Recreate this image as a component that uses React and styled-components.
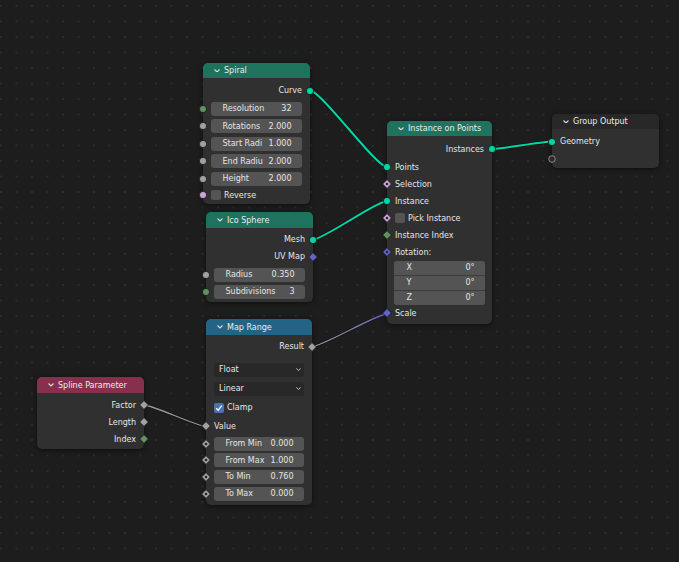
import React from "react";
import styled, { createGlobalStyle } from "styled-components";

const GEO = "#00d6a3";
const FLOAT = "#a1a1a1";
const INT = "#5e925f";
const BOOL = "#cca6d6";
const VEC = "#6363c7";

const Global = createGlobalStyle`
  html, body { margin: 0; padding: 0; background: #1d1d1d; }
  body { font-family: "DejaVu Sans", "Liberation Sans", sans-serif; }
`;

const Canvas = styled.div`
  position: relative;
  width: 679px;
  height: 562px;
  overflow: hidden;
  background-color: #1d1d1d;
  background-image: radial-gradient(circle, #2c2c2c 0.9px, transparent 1.4px);
  background-size: 15.5px 15.5px;
  background-position: -6.75px -1.75px;
  font-family: "DejaVu Sans", "Liberation Sans", sans-serif;
  font-size: 8px;
  color: #e6e6e6;
`;

const Wires = styled.svg`
  position: absolute;
  left: 0;
  top: 0;
`;

const NodeBox = styled.div`
  position: absolute;
  left: ${(p) => p.$x}px;
  top: ${(p) => p.$y}px;
  width: ${(p) => p.$w}px;
  background: #303030;
  border-radius: 5px;
  box-shadow: 0 1px 5px rgba(0, 0, 0, 0.55);
  display: flex;
  flex-direction: column;
  padding-bottom: ${(p) => p.$pb}px;
`;

const Header = styled.div`
  height: ${(p) => p.$h}px;
  background: ${(p) => p.$c};
  border-radius: 5px 5px 0 0;
  display: flex;
  align-items: center;
  gap: 4px;
  padding-left: 11px;
  color: #ededed;
  white-space: nowrap;
`;

const Row = styled.div`
  position: relative;
  height: ${(p) => p.$h}px;
  display: flex;
  align-items: center;
  justify-content: ${(p) => (p.$right ? "flex-end" : "flex-start")};
  padding: 0 8px;
  white-space: nowrap;
`;

const Gap = styled.div`
  height: ${(p) => p.$h}px;
  flex: none;
`;

const SocketWrap = styled.span`
  position: absolute;
  top: 50%;
  width: 10px;
  height: 10px;
  ${(p) =>
    p.$side === "right"
      ? "right: 0; transform: translate(50%, -50%);"
      : "left: 0; transform: translate(-50%, -50%);"}
  display: flex;
`;

const Field = styled.div`
  flex: 1;
  height: 14px;
  background: #545454;
  border-radius: 3px;
  display: flex;
  align-items: center;
  justify-content: space-between;
  padding: 0 10.5px 0 11.5px;
`;

const Select = styled.div`
  flex: 1;
  height: 14px;
  background: #282828;
  border-radius: 3px;
  display: flex;
  align-items: center;
  justify-content: space-between;
  padding: 0 3px 0 5px;
`;

const Box = styled.span`
  width: 10px;
  height: 10px;
  border-radius: 2px;
  background: ${(p) => (p.$on ? "#4772b3" : "#545454")};
  display: flex;
  align-items: center;
  justify-content: center;
  margin-right: 3px;
  flex: none;
`;

const VectorBox = styled.div`
  margin: 0 7px;
  border-radius: 3px;
  overflow: hidden;
  display: flex;
  flex-direction: column;
  gap: 1px;
  background: #3c3c3c;
`;

const VectorRow = styled.div`
  height: 14px;
  background: #545454;
  display: flex;
  align-items: center;
  justify-content: space-between;
  padding: 0 10.5px 0 12.5px;
`;

function Socket({ s, side }) {
  let shape;
  if (s.k === "hollow") {
    shape = <circle cx="5" cy="5" r="3.3" fill="#2a2a2a" stroke="#8c8c8c" strokeWidth="1" />;
  } else if (s.k === "circle") {
    shape = <circle cx="5" cy="5" r="3.6" fill={s.c} stroke="#151515" strokeWidth="0.8" />;
  } else {
    shape = (
      <>
        <polygon points="5,0.6 9.4,5 5,9.4 0.6,5" fill={s.c} stroke="#151515" strokeWidth="0.8" />
        {s.dot && <circle cx="5" cy="5" r="1.3" fill="#262626" />}
      </>
    );
  }
  return (
    <SocketWrap $side={side}>
      <svg width="10" height="10" viewBox="0 0 10 10">{shape}</svg>
    </SocketWrap>
  );
}

const Chevron = ({ w = 6, c = "#dcdcdc" }) => (
  <svg width={w} height={w * 0.6} viewBox="0 0 6 3.6" style={{ flex: "none" }}>
    <polyline points="0.5,0.5 3,3 5.5,0.5" fill="none" stroke={c} strokeWidth="1.1" />
  </svg>
);

const Check = () => (
  <svg width="8" height="8" viewBox="0 0 8 8">
    <polyline points="1.2,4.2 3.2,6.2 6.8,1.6" fill="none" stroke="#fff" strokeWidth="1.4" />
  </svg>
);

const c = (col) => ({ k: "circle", c: col });
const d = (col, dot = false) => ({ k: "diamond", c: col, dot });

const nodes = [
  {
    title: "Spiral", x: 203, y: 63, w: 107, hh: 15, color: "#1e735f", pb: 1,
    rows: [
      { t: "gap", h: 4 },
      { t: "out", label: "Curve", s: c(GEO), h: 17 },
      { t: "gap", h: 1 },
      { t: "field", label: "Resolution", v: "32", s: c(INT), h: 17.5 },
      { t: "field", label: "Rotations", v: "2.000", s: c(FLOAT), h: 17.5 },
      { t: "field", label: "Start Radi", v: "1.000", s: c(FLOAT), h: 17.5 },
      { t: "field", label: "End Radiu", v: "2.000", s: c(FLOAT), h: 17.5 },
      { t: "field", label: "Height", v: "2.000", s: c(FLOAT), h: 17.5 },
      { t: "check", label: "Reverse", s: c(BOOL), h: 15 },
    ],
  },
  {
    title: "Ico Sphere", x: 206, y: 212, w: 107, hh: 16, color: "#1e735f", pb: 1.5,
    rows: [
      { t: "gap", h: 3 },
      { t: "out", label: "Mesh", s: c(GEO), h: 17 },
      { t: "out", label: "UV Map", s: d(VEC), h: 17 },
      { t: "gap", h: 1.5 },
      { t: "field", label: "Radius", v: "0.350", s: c(FLOAT), h: 16.75 },
      { t: "field", label: "Subdivisions", v: "3", s: c(INT), h: 16.75 },
    ],
  },
  {
    title: "Instance on Points", x: 387, y: 121, w: 105, hh: 15, color: "#1e735f", pb: 2,
    rows: [
      { t: "gap", h: 4.5 },
      { t: "out", label: "Instances", s: c(GEO), h: 17 },
      { t: "gap", h: 1 },
      { t: "in", label: "Points", s: c(GEO), h: 17 },
      { t: "in", label: "Selection", s: d(BOOL, true), h: 17 },
      { t: "in", label: "Instance", s: c(GEO), h: 17 },
      { t: "check", label: "Pick Instance", s: d(BOOL, true), h: 17 },
      { t: "in", label: "Instance Index", s: d(INT), h: 17 },
      { t: "in", label: "Rotation:", s: d(VEC, true), h: 17 },
      { t: "vector", items: [["X", "0°"], ["Y", "0°"], ["Z", "0°"]] },
      { t: "in", label: "Scale", s: d(VEC), h: 17 },
    ],
  },
  {
    title: "Group Output", x: 552, y: 114, w: 107, hh: 15, color: "#282828", pb: 1,
    rows: [
      { t: "gap", h: 4 },
      { t: "in", label: "Geometry", s: c(GEO), h: 17 },
      { t: "in", label: "", s: { k: "hollow" }, h: 17 },
    ],
  },
  {
    title: "Map Range", x: 206, y: 319, w: 106, hh: 16, color: "#236386", pb: 3,
    rows: [
      { t: "gap", h: 3 },
      { t: "out", label: "Result", s: d(FLOAT), h: 17 },
      { t: "gap", h: 5 },
      { t: "select", label: "Float", h: 19 },
      { t: "select", label: "Linear", h: 19 },
      { t: "check", label: "Clamp", on: true, h: 19 },
      { t: "in", label: "Value", s: d(FLOAT), h: 18.5 },
      { t: "field", label: "From Min", v: "0.000", s: d(FLOAT, true), h: 16.6 },
      { t: "field", label: "From Max", v: "1.000", s: d(FLOAT, true), h: 16.6 },
      { t: "field", label: "To Min", v: "0.760", s: d(FLOAT, true), h: 16.6 },
      { t: "field", label: "To Max", v: "0.000", s: d(FLOAT, true), h: 16.6 },
    ],
  },
  {
    title: "Spline Parameter", x: 37, y: 377, w: 107, hh: 16, color: "#86304c", pb: 1.5,
    rows: [
      { t: "gap", h: 3.5 },
      { t: "out", label: "Factor", s: d(FLOAT), h: 17 },
      { t: "out", label: "Length", s: d(FLOAT), h: 17 },
      { t: "out", label: "Index", s: d(INT), h: 17 },
    ],
  },
];

function NodeRow({ r }) {
  switch (r.t) {
    case "gap":
      return <Gap $h={r.h} />;
    case "out":
      return (
        <Row $h={r.h} $right>
          {r.label}
          <Socket s={r.s} side="right" />
        </Row>
      );
    case "in":
      return (
        <Row $h={r.h}>
          {r.s && <Socket s={r.s} side="left" />}
          {r.label}
        </Row>
      );
    case "field":
      return (
        <Row $h={r.h}>
          <Socket s={r.s} side="left" />
          <Field>
            <span>{r.label}</span>
            <span>{r.v}</span>
          </Field>
        </Row>
      );
    case "check":
      return (
        <Row $h={r.h}>
          {r.s && <Socket s={r.s} side="left" />}
          <Box $on={r.on}>{r.on && <Check />}</Box>
          {r.label}
        </Row>
      );
    case "select":
      return (
        <Row $h={r.h}>
          <Select>
            <span>{r.label}</span>
            <Chevron w={5} c="#cfcfcf" />
          </Select>
        </Row>
      );
    case "vector":
      return (
        <VectorBox>
          {r.items.map(([k, v]) => (
            <VectorRow key={k}>
              <span>{k}</span>
              <span>{v}</span>
            </VectorRow>
          ))}
        </VectorBox>
      );
    default:
      return null;
  }
}

function Node({ n }) {
  return (
    <NodeBox $x={n.x} $y={n.y} $w={n.w} $pb={n.pb}>
      <Header $h={n.hh} $c={n.color}>
        <Chevron />
        {n.title}
      </Header>
      {n.rows.map((r, i) => (
        <NodeRow key={i} r={r} />
      ))}
    </NodeBox>
  );
}

function wire(x1, y1, x2, y2) {
  const h = Math.abs(x2 - x1) * 0.14;
  return `M${x1},${y1} C${x1 + h},${y1} ${x2 - h},${y2} ${x2},${y2}`;
}

const links = [
  { a: [310, 90.5], b: [387, 167], col: GEO },
  { a: [313, 239.5], b: [387, 201], col: GEO },
  { a: [492, 149], b: [552, 141.5], col: GEO },
  { a: [312, 346.5], b: [387, 314], col: "url(#gv)", thin: true },
  { a: [144, 405], b: [206, 426.5], col: "#9a9a9a", thin: true },
];

export default function App() {
  return (
    <>
      <Global />
      <Canvas>
        <Wires width="679" height="562">
          <defs>
            <linearGradient id="gv" gradientUnits="userSpaceOnUse" x1="312" y1="346" x2="387" y2="314">
              <stop offset="0" stopColor="#a1a1a1" />
              <stop offset="1" stopColor={VEC} />
            </linearGradient>
          </defs>
          {links.map((l, i) => (
            <g key={i}>
              <path d={wire(...l.a, ...l.b)} fill="none" stroke="#141414" strokeWidth={l.thin ? 2.6 : 3.4} />
              <path d={wire(...l.a, ...l.b)} fill="none" stroke={l.col} strokeWidth={l.thin ? 1.3 : 2} />
            </g>
          ))}
        </Wires>
        {nodes.map((n) => (
          <Node key={n.title} n={n} />
        ))}
      </Canvas>
    </>
  );
}
